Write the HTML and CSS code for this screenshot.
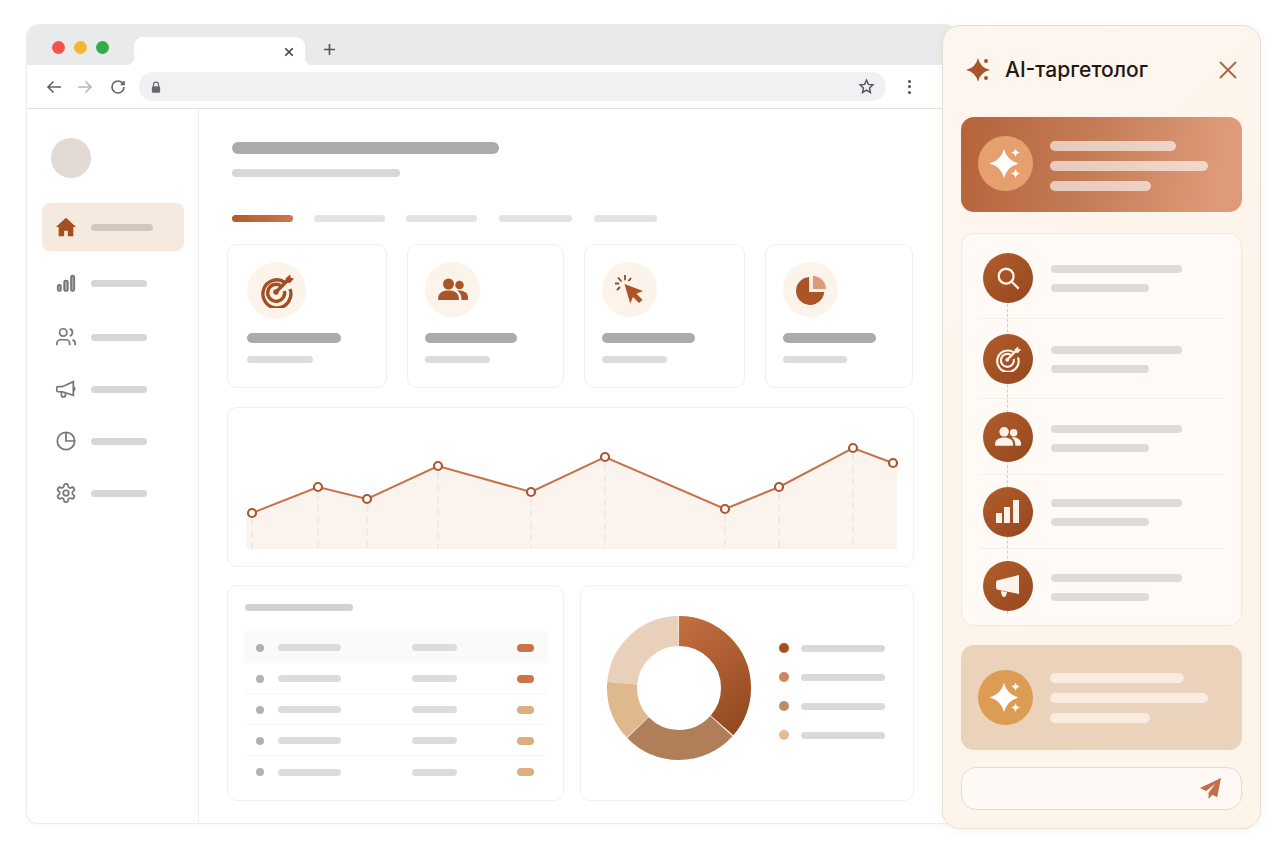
FILE: index.html
```html
<!DOCTYPE html>
<html lang="ru">
<head>
<meta charset="utf-8">
<title>AI-таргетолог</title>
<link rel="stylesheet" href="styles.css">
</head>
<body>
<div class="browser">
  <div class="tabbar">
    <div class="lights"><i class="light red"></i><i class="light yellow"></i><i class="light green"></i></div>
    <div class="tab">
      <svg class="tab-x" viewBox="0 0 12 12"><path d="M1.500 1.500l9 9M10.500 1.500l-9 9"/></svg>
    </div>
    <svg class="tab-plus" viewBox="0 0 14 14"><path d="M7 1v12M1 7h12"/></svg>
  </div>
  <div class="toolbar">
    <svg class="tb-icon" viewBox="0 0 16 16"><path d="M15 8H2M7.500 2.500L2 8l5.500 5.500"/></svg>
    <svg class="tb-icon faint" viewBox="0 0 16 16"><path d="M1 8h13M8.500 2.500L14 8l-5.500 5.500"/></svg>
    <svg class="tb-icon reload" viewBox="0 0 24 24"><path d="M21 12a9 9 0 1 1-9-9c2.520 0 4.930 1 6.740 2.740L21 8"/><path d="M21 3v5h-5"/></svg>
    <div class="omnibox">
      <svg class="lock" viewBox="0 0 12 14"><path d="M3 6V4a3 3 0 0 1 6 0v2" class="lock-arc"/><rect x="1" y="6" width="10" height="8" rx="1.500"/></svg>
      <svg class="star" viewBox="0 0 24 24"><path d="M12 3l2.700 6 6.300.700-4.700 4.300 1.300 6.500L12 17.200 6.400 20.500l1.300-6.500L3 9.700 9.300 9z"/></svg>
    </div>
    <div class="kebab"><i></i><i></i><i></i></div>
  </div>
  <div class="page">
    <aside class="sidebar">
      <div class="avatar"></div>
      <nav class="nav">
        <div class="nav-item active">
          <svg class="nav-icon" viewBox="0 0 24 24"><path class="home" d="M12 2L1 12h3v10h6v-6h4v6h6V12h3z"/></svg>
          <span class="bar nav-bar-active"></span>
        </div>
        <div class="nav-item r1">
          <svg class="nav-icon line bars-icon" viewBox="0 0 24 24"><rect x="3" y="14" width="3.500" height="6.500" rx="1.500"/><rect x="10" y="9.500" width="4" height="11" rx="1.500"/><rect x="17.500" y="4" width="3.500" height="16.500" rx="1.500"/></svg>
          <span class="bar nav-bar"></span>
        </div>
        <div class="nav-item r2">
          <svg class="nav-icon line" viewBox="0 0 24 24"><path d="M16 21v-2a4 4 0 0 0-4-4H6a4 4 0 0 0-4 4v2"/><circle cx="9" cy="7" r="4"/><path d="M22 21v-2a4 4 0 0 0-3-3.870"/><path d="M16 3.130a4 4 0 0 1 0 7.750"/></svg>
          <span class="bar nav-bar"></span>
        </div>
        <div class="nav-item r3">
          <svg class="nav-icon line" viewBox="0 0 24 24"><path d="M2 10.500v3.500a1 1 0 0 0 1 1h5l12 4V4L8 9.500H3a1 1 0 0 0-1 1z"/><path d="M7 15v3.500a2.200 2.200 0 0 0 4.400 0V16.200"/><path d="M20 9.500a2.500 2.500 0 0 1 1.500 2.300 2.500 2.500 0 0 1-1.500 2.200"/></svg>
          <span class="bar nav-bar"></span>
        </div>
        <div class="nav-item r3">
          <svg class="nav-icon line" viewBox="0 0 24 24"><circle cx="12" cy="12" r="9.500"/><path d="M12 2.500V12h9.500"/></svg>
          <span class="bar nav-bar"></span>
        </div>
        <div class="nav-item r3">
          <svg class="nav-icon line" viewBox="0 0 24 24"><path d="M12.220 2h-.44a2 2 0 0 0-2 2v.18a2 2 0 0 1-1 1.730l-.43.25a2 2 0 0 1-2 0l-.15-.08a2 2 0 0 0-2.730.73l-.22.38a2 2 0 0 0 .73 2.730l.15.1a2 2 0 0 1 1 1.720v.51a2 2 0 0 1-1 1.740l-.15.09a2 2 0 0 0-.73 2.730l.22.38a2 2 0 0 0 2.730.73l.15-.08a2 2 0 0 1 2 0l.43.25a2 2 0 0 1 1 1.730V20a2 2 0 0 0 2 2h.44a2 2 0 0 0 2-2v-.18a2 2 0 0 1 1-1.730l.43-.25a2 2 0 0 1 2 0l.15.08a2 2 0 0 0 2.730-.73l.22-.39a2 2 0 0 0-.73-2.730l-.15-.08a2 2 0 0 1-1-1.740v-.5a2 2 0 0 1 1-1.740l.15-.09a2 2 0 0 0 .73-2.730l-.22-.38a2 2 0 0 0-2.730-.73l-.15.08a2 2 0 0 1-2 0l-.43-.25a2 2 0 0 1-1-1.730V4a2 2 0 0 0-2-2z"/><circle cx="12" cy="12" r="3"/></svg>
          <span class="bar nav-bar"></span>
        </div>
      </nav>
    </aside>
    <main class="main">
      <div class="bar title-bar"></div>
      <div class="bar sub-bar"></div>
      <div class="tabs">
        <span class="bar tab-bar tab-active"></span>
        <span class="bar tab-bar w71"></span>
        <span class="bar tab-bar w71 g1"></span>
        <span class="bar tab-bar w73"></span>
        <span class="bar tab-bar w63"></span>
      </div>
      <div class="cards">
        <div class="card stat first">
          <div class="stat-icon big">
            <svg viewBox="0 0 34 34" class="ic-target"><path d="M25 8.500A14 14 0 1 0 30 15"/><path d="M20.500 11.500A8.500 8.500 0 1 0 24.500 17"/><circle cx="16" cy="18" r="2.800" class="dot"/><path d="M16 18L29 5"/><path class="head" d="M25.500 4.500L30 0.500l.8 3.200 3.200.8-4 4.500-3.800-.4z"/></svg>
          </div>
          <div class="bar stat-main w94"></div>
          <div class="bar stat-sub w66"></div>
        </div>
        <div class="card stat">
          <div class="stat-icon">
            <svg viewBox="0 0 30 30" class="ic-fill"><circle cx="10.500" cy="9" r="5.500"/><circle cx="21.500" cy="10" r="4.300"/><path d="M0 24c0-6 4.500-8.500 10.500-8.500S21 18 21 24a1 1 0 0 1-1 1H1a1 1 0 0 1-1-1z"/><path d="M19 15.600c5-.8 11 .9 11 6.900v1.500a1 1 0 0 1-1 1h-5.500c0-4-1-7.200-4.500-9.400z"/></svg>
          </div>
          <div class="bar stat-main w92"></div>
          <div class="bar stat-sub w65"></div>
        </div>
        <div class="card stat">
          <div class="stat-icon">
            <svg viewBox="0 0 30 30" class="ic-cursor"><path class="arrow" d="M9.500 9l18.500 7-6.500 2.800 6 6-3.500 3.200-6-6-2.800 6.500z"/><path class="rays" d="M10 0.500v4M3.500 3l2.500 3M15.500 3.500L14 5.500M0 8.500h3.500M2.500 14.500l2-2"/></svg>
          </div>
          <div class="bar stat-main w93"></div>
          <div class="bar stat-sub w65"></div>
        </div>
        <div class="card stat">
          <div class="stat-icon">
            <svg viewBox="0 0 32 32" class="ic-pie"><path class="pie-dark" d="M14 2v16h16A15 15 0 1 1 14 2z"/><path class="pie-light" d="M18 1a14 14 0 0 1 14 14H18z"/></svg>
          </div>
          <div class="bar stat-main w93"></div>
          <div class="bar stat-sub w64"></div>
        </div>
      </div>
      <div class="card chart">
        <svg class="chart-svg" viewBox="228 408 685 158">
          <path class="area" d="M246 516L252 513L318 487L367 499L438 466L531 492L605 457L725 509L779 487L853 448L897 465V549H246z"/>
          <path class="grid" d="M252 519V549M318 493V549M367 505V549M438 472V549M531 498V549M605 463V549M725 515V549M779 493V549M853 454V549"/>
          <path class="line" d="M252 513L318 487L367 499L438 466L531 492L605 457L725 509L779 487L853 448L893 463"/>
          <g class="pts">
            <circle cx="252" cy="513" r="4"/><circle cx="318" cy="487" r="4"/><circle cx="367" cy="499" r="4"/><circle cx="438" cy="466" r="4"/><circle cx="531" cy="492" r="4"/><circle cx="605" cy="457" r="4"/><circle cx="725" cy="509" r="4"/><circle cx="779" cy="487" r="4"/><circle cx="853" cy="448" r="4"/><circle cx="893" cy="463" r="4"/>
          </g>
        </svg>
      </div>
      <div class="bottom">
        <div class="card table">
          <div class="bar table-title"></div>
          <div class="t-row hl"><i class="t-dot"></i><span class="bar t-a"></span><span class="bar t-b"></span><span class="t-pill hot"></span></div>
          <div class="t-row"><i class="t-dot"></i><span class="bar t-a"></span><span class="bar t-b"></span><span class="t-pill hot"></span></div>
          <div class="t-row"><i class="t-dot"></i><span class="bar t-a"></span><span class="bar t-b"></span><span class="t-pill warm"></span></div>
          <div class="t-row"><i class="t-dot"></i><span class="bar t-a"></span><span class="bar t-b"></span><span class="t-pill warm"></span></div>
          <div class="t-row last"><i class="t-dot"></i><span class="bar t-a"></span><span class="bar t-b"></span><span class="t-pill warm"></span></div>
        </div>
        <div class="card donut-card">
          <svg class="donut" viewBox="0 0 144 144">
            <defs>
              <linearGradient id="dg" x1="1" y1="0.150" x2="0" y2="0.850"><stop offset="0" stop-color="#c87344"/><stop offset="1" stop-color="#94491f"/></linearGradient>
            </defs>
            <g transform="rotate(-90 72 72)" class="segs">
              <circle cx="72" cy="72" r="57" pathLength="360" stroke="url(#dg)" stroke-dasharray="131 229" stroke-dashoffset="0"/>
              <circle cx="72" cy="72" r="57" pathLength="360" stroke="#b07f5a" stroke-dasharray="94 266" stroke-dashoffset="-132"/>
              <circle cx="72" cy="72" r="57" pathLength="360" stroke="#e0b88e" stroke-dasharray="48.500 311.500" stroke-dashoffset="-226.500"/>
              <circle cx="72" cy="72" r="57" pathLength="360" stroke="#e8d0ba" stroke-dasharray="84.500 275.500" stroke-dashoffset="-275"/>
            </g>
          </svg>
          <div class="legend">
            <div class="leg"><i class="leg-dot c1"></i><span class="bar leg-bar"></span></div>
            <div class="leg"><i class="leg-dot c2"></i><span class="bar leg-bar"></span></div>
            <div class="leg"><i class="leg-dot c3"></i><span class="bar leg-bar"></span></div>
            <div class="leg"><i class="leg-dot c4"></i><span class="bar leg-bar"></span></div>
          </div>
        </div>
      </div>
    </main>
  </div>
</div>

<aside class="panel">
  <header class="panel-head">
    <svg class="head-spark" viewBox="0 0 26 26"><path d="M12 1Q14.200 10.800 24 13Q14.200 15.200 12 25Q9.800 15.200 0 13Q9.800 10.800 12 1z"/><circle cx="20" cy="4" r="2"/><circle cx="20" cy="21" r="2"/></svg>
    <h1 class="panel-title">AI-таргетолог</h1>
    <svg class="panel-close" viewBox="0 0 18 18"><path d="M1 1l16 16M17 1L1 17"/></svg>
  </header>

  <section class="promo promo-hot">
    <div class="promo-icon hot-icon">
      <svg viewBox="0 0 32 32" class="spark"><path d="M14 1Q17 12.500 28.500 15.500Q17 18.500 14 30Q11 18.500 -.5 15.500Q11 12.500 14 1z"/><path d="M25.500 .5Q26.200 3.800 30 4.500Q26.200 5.200 25.500 9Q24.800 5.200 21 4.500Q24.800 3.800 25.500 .5zM25.500 21Q26.200 24.800 30 25.500Q26.200 26.200 25.500 30Q24.800 26.200 21 25.500Q24.800 24.800 25.500 21z"/></svg>
    </div>
    <div class="promo-lines hot-lines">
      <span class="pl w126"></span><span class="pl w158"></span><span class="pl w101"></span>
    </div>
  </section>

  <section class="steps">
    <i class="steps-rail"></i>
    <div class="step s1">
      <div class="step-icon"><svg viewBox="0 0 28 28" class="si-line"><circle cx="12" cy="12" r="8"/><path d="M18 18l7.500 7.500"/></svg></div>
      <div class="step-lines"><span class="bar sl-a"></span><span class="bar sl-b"></span></div>
    </div>
    <div class="step s2">
      <div class="step-icon"><svg viewBox="0 0 34 34" class="si-target"><path d="M25 8.500A14 14 0 1 0 30 15"/><path d="M20.500 11.500A8.500 8.500 0 1 0 24.500 17"/><circle cx="16" cy="18" r="2.500" class="d"/><path d="M16 18L29 5"/><path class="h" d="M25.500 4.500L30 0.500l.8 3.200 3.200.8-4 4.500-3.800-.4z"/></svg></div>
      <div class="step-lines"><span class="bar sl-a"></span><span class="bar sl-b"></span></div>
    </div>
    <div class="step s3">
      <div class="step-icon"><svg viewBox="0 0 30 30" class="si-fill"><circle cx="10.500" cy="9" r="5.500"/><circle cx="21.500" cy="10" r="4.300"/><path d="M0 24c0-6 4.500-8.500 10.500-8.500S21 18 21 24a1 1 0 0 1-1 1H1a1 1 0 0 1-1-1z"/><path d="M19 15.600c5-.8 11 .9 11 6.900v1.500a1 1 0 0 1-1 1h-5.500c0-4-1-7.200-4.500-9.400z"/></svg></div>
      <div class="step-lines"><span class="bar sl-a"></span><span class="bar sl-b"></span></div>
    </div>
    <div class="step s4">
      <div class="step-icon"><svg viewBox="0 0 26 26" class="si-fill"><rect x="1" y="14" width="6" height="10"/><rect x="9" y="8" width="6" height="16"/><rect x="18" y="1" width="6" height="23"/></svg></div>
      <div class="step-lines"><span class="bar sl-a"></span><span class="bar sl-b"></span></div>
    </div>
    <div class="step s5">
      <div class="step-icon"><svg viewBox="0 0 26 26" class="si-fill"><path d="M24 2v19L4 17a3 3 0 0 1-3-3v-4a3 3 0 0 1 3-3z"/><path d="M6 18l6 1c-.5 3-1.500 5-3 5s-3-3-3-6z"/></svg></div>
      <div class="step-lines"><span class="bar sl-a"></span><span class="bar sl-b"></span></div>
    </div>
  </section>

  <section class="promo promo-soft">
    <div class="promo-icon soft-icon">
      <svg viewBox="0 0 32 32" class="spark"><path d="M14 1Q17 12.500 28.500 15.500Q17 18.500 14 30Q11 18.500 -.5 15.500Q11 12.500 14 1z"/><path d="M25.500 .5Q26.200 3.800 30 4.500Q26.200 5.200 25.500 9Q24.800 5.200 21 4.500Q24.800 3.800 25.500 .5zM25.500 21Q26.200 24.800 30 25.500Q26.200 26.200 25.500 30Q24.800 26.200 21 25.500Q24.800 24.800 25.500 21z"/></svg>
    </div>
    <div class="promo-lines">
      <span class="pl soft w134"></span><span class="pl soft w158"></span><span class="pl soft w100"></span>
    </div>
  </section>

  <div class="composer">
    <svg class="send" viewBox="0 0 24 24"><path d="M23 1L1 11.500l6.500 3L17 7l-7 9.500V23l4-4.500 5 2.500z"/></svg>
  </div>
</aside>
</body>
</html>
```
FILE: styles.css
```css
* { box-sizing: border-box; }
html, body { margin: 0; padding: 0; }
body {
  width: 1280px;
  height: 853px;
  overflow: hidden;
  background: #fff;
  padding: 25px 0 0 27px;
  font-family: Inter, "Liberation Sans", sans-serif;
  position: relative;
}
i { display: block; }
.bar { display: block; border-radius: 4px; background: #dcdcdc; }

/* browser frame */
.browser {
  width: 930px;
  height: 798px;
  border-radius: 12px 12px 10px 10px;
  background: #fff;
  box-shadow: 0 0 0 1px #ececec, 0 2px 6px rgba(0,0,0,.03);
  overflow: hidden;
}
.tabbar {
  height: 40px;
  background: #e9eaec;
  display: flex;
  align-items: flex-end;
  position: relative;
}
.lights { display: flex; gap: 9px; align-self: flex-start; margin: 16px 0 0 25px; width: 82px; }
.light { width: 13px; height: 13px; border-radius: 50%; }
.red { background: #f0544c; }
.yellow { background: #f6b52f; }
.green { background: #2fae48; }
.tab {
  width: 171px;
  height: 28px;
  background: #fff;
  border-radius: 9px 9px 0 0;
  position: relative;
  display: flex;
  justify-content: flex-end;
  align-items: center;
  padding: 0 11px 0 0;
}
.tab::before, .tab::after {
  content: "";
  position: absolute;
  bottom: 0;
  width: 8px;
  height: 8px;
}
.tab::before { left: -8px; background: radial-gradient(circle at 0 0, #e9eaec 8px, #fff 8.5px); }
.tab::after { right: -8px; background: radial-gradient(circle at 100% 0, #e9eaec 8px, #fff 8.5px); }
.tab-x { width: 10px; height: 10px; margin-top: 1px; fill: none; stroke: #444; stroke-width: 2; }
.tab-plus { width: 13px; height: 13px; margin: 0 0 9px 18px; fill: none; stroke: #555; stroke-width: 1.800; }

.toolbar {
  height: 44px;
  border-bottom: 1px solid #e2e2e2;
  display: flex;
  align-items: center;
  padding: 0 0 0 19px;
  background: #fff;
}
.tb-icon { width: 16px; height: 16px; fill: none; stroke: #5f6368; stroke-width: 1.600; margin-right: 15px; flex: none; }
.tb-icon.faint { stroke: #b4b6b9; margin-right: 17px; }
.tb-icon.reload { stroke-width: 2.400; margin-right: 13px; }
.omnibox {
  width: 747px;
  height: 29px;
  background: #f0f1f3;
  border-radius: 15px;
  display: flex;
  align-items: center;
  justify-content: space-between;
  padding: 0 11px 0 12px;
  flex: none;
}
.lock { width: 10px; height: 12px; fill: #66686c; }
.lock-arc { fill: none; stroke: #66686c; stroke-width: 1.500; }
.star { width: 17px; height: 17px; fill: none; stroke: #4f5256; stroke-width: 2; }
.kebab { display: flex; flex-direction: column; gap: 2.500px; margin-left: 22px; }
.kebab i { width: 3px; height: 3px; border-radius: 50%; background: #4f5256; }

/* page */
.page { display: flex; height: 714px; }
.sidebar {
  width: 172px;
  flex: none;
  border-right: 1px solid #efefef;
  padding: 29px 14px 0 15px;
}
.avatar { width: 40px; height: 40px; border-radius: 50%; background: #e3d9d5; margin: 0 0 25px 9px; }
.nav-item { display: flex; align-items: center; width: 142px; height: 22px; padding-left: 13px; }
.nav-item.active { height: 48px; background: #f6e9df; border-radius: 8px; margin-bottom: 21px; }
.nav-item.r1 { margin-bottom: 32px; }
.nav-item.r2 { margin-bottom: 30px; }
.nav-item.r3 { margin-bottom: 30px; }
.nav-icon { width: 22px; height: 22px; flex: none; margin-right: 14px; }
.nav-icon.line { fill: none; stroke: #747679; stroke-width: 1.900; }
.nav-icon.bars-icon { fill: #a8a8a8; }
.home { fill: #a2501f; }
.nav-bar-active { width: 62px; height: 7px; background: #d3c8c1; }
.nav-bar { width: 56px; height: 7px; background: #d6d6d6; }

.main { flex: 1; padding: 33px 0 0 28px; min-width: 0; }
.title-bar { width: 267px; height: 12px; margin-left: 5px; background: #ababab; border-radius: 6px; }
.sub-bar { width: 168px; height: 8px; margin: 15px 0 0 5px; background: #d8d8d8; }
.tabs { display: flex; margin: 38px 0 0 5px; }
.tab-bar { height: 7px; margin-right: 21px; background: #e3e3e3; }
.tab-active { width: 61px; background: linear-gradient(90deg, #b45a2e, #c9784c); }
.w71 { width: 71px; }
.g1 { margin-right: 22px; }
.w73 { width: 73px; margin-right: 22px; }
.w63 { width: 63px; }

.card { border: 1px solid #f0f0f0; border-radius: 10px; background: #fff; }
.cards {
  display: grid;
  grid-template-columns: 160px 157px 161px 148px;
  gap: 20px;
  margin-top: 22px;
  width: 687px;
  height: 144px;
}
.stat { padding: 17px 0 0 17px; }
.stat.first { padding-left: 19px; }
.stat-icon {
  width: 55px;
  height: 55px;
  border-radius: 50%;
  background: #fcf3ea;
  display: flex;
  align-items: center;
  justify-content: center;
}
.stat-icon.big { width: 59px; height: 57px; margin-bottom: -2px; }
.stat-icon svg { width: 30px; height: 30px; }
.stat-icon.big svg { width: 34px; height: 34px; }
.stat-main { height: 10px; margin-top: 16px; background: #ababab; border-radius: 5px; }
.stat-sub { height: 7px; margin-top: 13px; background: #dcdcdc; }
.w94 { width: 94px; } .w92 { width: 92px; } .w93 { width: 93px; }
.w66 { width: 66px; } .w65 { width: 65px; } .w64 { width: 64px; }
.ic-target { fill: none; stroke: #a04f22; stroke-width: 3.400; }
.ic-target .dot { fill: #a04f22; stroke: none; }
.ic-target .head { fill: #a04f22; stroke: none; }
.ic-fill { fill: #a8552a; }
.ic-cursor .arrow { fill: #ad5427; }
.ic-cursor .rays { fill: none; stroke: #8f4a25; stroke-width: 1.800; stroke-linecap: round; }
.pie-dark { fill: #a95528; }
.pie-light { fill: #dd9a77; }

.chart { width: 687px; height: 160px; margin-top: 19px; overflow: hidden; }
.chart-svg { display: block; width: 685px; height: 158px; }
.area { fill: #fbf3ee; }
.grid { fill: none; stroke: #e6dfda; stroke-width: 1; stroke-dasharray: 7 5; }
.line { fill: none; stroke: #c4724a; stroke-width: 2; }
.pts circle { fill: #fff; stroke: #a9582f; stroke-width: 2.200; }

.bottom { display: grid; grid-template-columns: 337px 334px; gap: 16px; margin-top: 18px; }
.table { height: 216px; padding: 18px 15px 0 16px; }
.table-title { width: 108px; height: 7px; margin: 0 0 20px 1px; background: #d2d2d2; }
.t-row {
  height: 31px;
  display: flex;
  align-items: center;
  padding: 1px 0 0 12px;
  border-bottom: 1px solid #f5f5f5;
}
.t-row.hl { height: 32px; background: #fbfaf8; border-bottom: 0; }
.t-row.last { border-bottom: 0; }
.t-dot { width: 8px; height: 8px; border-radius: 50%; background: #b2b2b2; margin-right: 14px; flex: none; }
.t-a { width: 63px; height: 7px; margin-right: 71px; flex: none; }
.t-b { width: 45px; height: 7px; margin-right: 60px; flex: none; }
.t-pill { width: 17px; height: 8px; border-radius: 4px; flex: none; display: block; }
.hot { background: #cc7446; }
.warm { background: #dcaf7d; }

.donut-card { height: 216px; display: flex; padding: 30px 0 0 26px; }
.donut { width: 144px; height: 144px; flex: none; }
.segs circle { fill: none; stroke-width: 30; }
.legend { margin: 27px 0 0 28px; display: flex; flex-direction: column; gap: 19px; }
.leg { display: flex; align-items: center; height: 10px; }
.leg-dot { width: 10px; height: 10px; border-radius: 50%; margin-right: 12px; flex: none; }
.c1 { background: #a5501f; } .c2 { background: #cf8561; } .c3 { background: #bf8d60; } .c4 { background: #e3bd93; }
.leg-bar { width: 84px; height: 7px; background: #d9d9d9; }

/* assistant panel, floating over the browser */
.panel {
  position: absolute;
  left: 942px;
  top: 25px;
  width: 319px;
  height: 804px;
  background: linear-gradient(135deg, #fdf6ee, #fdf4ea);
  border: 1px solid #eadcd1;
  border-radius: 18px;
  box-shadow: 0 2px 10px rgba(120,80,50,.06);
  padding: 0 18px 0 18px;
}
.panel-head { display: flex; align-items: center; height: 91px; padding: 0 0 3px 5px; }
.head-spark { width: 26px; height: 26px; fill: #a5562c; flex: none; margin-right: 13px; }
.panel-title { margin: 0; font-size: 21px; font-weight: 500; color: #241610; line-height: 24px; white-space: nowrap; }
.panel-close { width: 18px; height: 18px; margin-left: auto; margin-right: 5px; fill: none; stroke: #a9694a; stroke-width: 2; }

.promo { display: flex; align-items: center; width: 281px; border-radius: 13px; padding-left: 17px; }
.promo-hot { height: 95px; background: linear-gradient(100deg, #b5633a 0%, #c47c56 45%, #df9a79 90%); }
.promo-soft { height: 105px; margin-top: 19px; background: #ebd2ba; }
.promo-icon { width: 55px; height: 55px; border-radius: 50%; display: flex; align-items: center; justify-content: center; flex: none; margin-right: 17px; }
.hot-icon { background: #e69f6f; margin-bottom: 2px; }
.soft-icon { background: #dd9c53; }
.spark { width: 32px; height: 32px; fill: #fff; overflow: visible; }
.promo-lines { display: flex; flex-direction: column; gap: 10px; }
.hot-lines { margin-top: 2px; }
.pl { display: block; height: 10px; border-radius: 5px; background: rgba(255,255,255,.62); }
.pl.soft { background: #f8ebdf; }
.w126 { width: 126px; } .w158 { width: 158px; } .w101 { width: 101px; } .w134 { width: 134px; } .w100 { width: 100px; }

.steps {
  position: relative;
  width: 281px;
  height: 393px;
  margin-top: 21px;
  background: #fffaf6;
  border: 1px solid #f3e8de;
  border-radius: 13px;
  padding: 0 17px 0 17px;
}
.steps-rail {
  position: absolute;
  left: 45px;
  top: 70px;
  height: 310px;
  border-left: 1px dashed #e0c9bb;
}
.step { position: relative; display: flex; align-items: center; border-bottom: 1px solid #f6efe8; }
.s1 { height: 85px; padding-top: 3px; }
.s2 { height: 80px; }
.s3 { height: 76px; padding-top: 1px; }
.s4 { height: 74px; }
.s5 { height: 74px; border-bottom: 0; }
.step-icon {
  width: 50px;
  height: 50px;
  border-radius: 50%;
  margin-left: 4px;
  margin-right: 18px;
  flex: none;
  background: linear-gradient(140deg, #b25d2d, #94471d);
  display: flex;
  align-items: center;
  justify-content: center;
}
.step-icon svg { width: 26px; height: 26px; }
.si-line { fill: none; stroke: #fdf3ea; stroke-width: 2.500; }
.si-target { fill: none; stroke: #fdf3ea; stroke-width: 2.800; }
.si-target .d, .si-target .h { fill: #fdf3ea; stroke: none; }
.si-fill { fill: #fdf3ea; }
.step-lines { display: flex; flex-direction: column; gap: 11px; margin-top: 2px; }
.sl-a { width: 131px; height: 8px; background: #dedbd8; }
.sl-b { width: 98px; height: 8px; background: #dedbd8; }

.composer {
  display: flex;
  align-items: center;
  justify-content: flex-end;
  width: 281px;
  height: 43px;
  margin-top: 17px;
  background: #fef9f4;
  border: 1px solid #e5dbd1;
  border-radius: 15px;
  padding-right: 19px;
}
.send { width: 23px; height: 23px; fill: #c26f48; }
```
